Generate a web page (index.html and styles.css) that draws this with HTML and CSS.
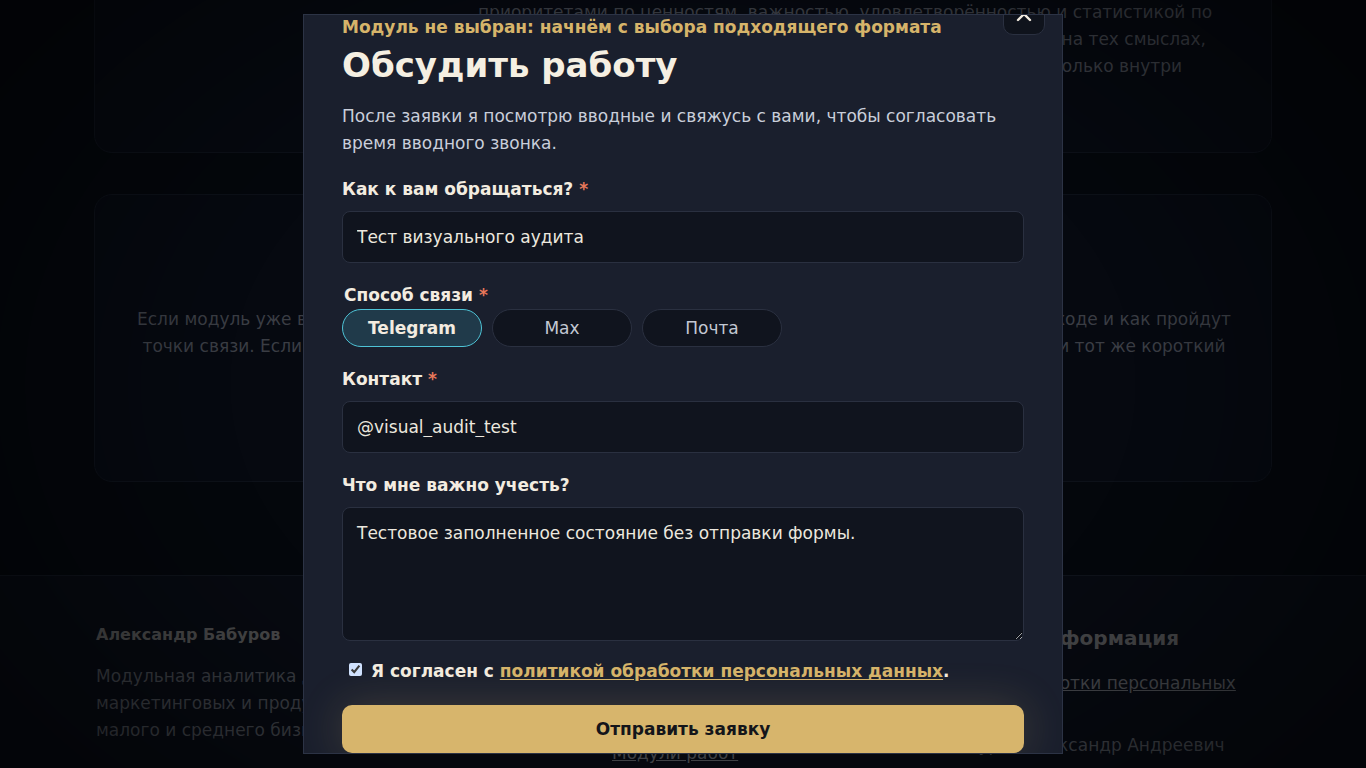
FILE: index.html
```html
<!DOCTYPE html>
<html lang="ru">
<head>
<meta charset="utf-8">
<title>Обсудить работу</title>
<link rel="stylesheet" href="styles.css">
</head>
<body>
<main class="page">
  <section class="card card-top">
    <h2 class="card-top-title">Принцип работы</h2>
    <p class="card-top-text">
      <span class="ln">Каждый модуль собирает данные о клиентах и связывает их с</span>
      <span class="ln">приоритетами по ценностям, важностью, удовлетворённостью и статистикой по</span>
      <span class="ln ln-c"><span>каждому сегменту, чтобы решения ещё</span><span>на тех смыслах,</span></span>
      <span class="ln ln-d"><span>которые важны клиентам, а не</span><span>только внутри</span></span>
      <span class="ln">компании.</span>
    </p>
  </section>

  <section class="card card-mid">
    <h3 class="card-mid-title">Как проходит вводный звонок</h3>
    <p class="card-mid-text">
      <span class="cl cl-1"><span>Если модуль уже выбран, обсудим</span><span>что будет происходить в ходе и как пройдут</span></span>
      <span class="cl cl-2"><span>точки связи. Если модуль ещё не выбран,</span><span>и тот же короткий</span></span>
    </p>
    <span class="ghost-btn">Обсудить работу</span>
  </section>
</main>

<footer class="footer">
  <div class="footer-inner">
    <div class="f-col">
      <div class="f-brand">Александр Бабуров</div>
      <p class="f-text">Модульная аналитика для принятия<br>маркетинговых и продуктовых решений<br>малого и среднего бизнеса.</p>
    </div>
    <div class="f-col">
      <h4 class="f-head">Навигация</h4>
      <ul class="f-list">
        <li><a class="f-link" href="#">Главная</a></li>
        <li><a class="f-link" href="#">Подход</a></li>
        <li><a class="f-link" href="#">Модули работ</a></li>
      </ul>
    </div>
    <div class="f-col">
      <h4 class="f-head">Правовая информация</h4>
      <ul class="f-list">
        <li><a class="f-link" href="#">Политика обработки персональных данных</a></li>
        <li class="f-plain">ИП Бабуров Александр Андреевич</li>
      </ul>
    </div>
  </div>
</footer>

<div class="backdrop"></div>

<div class="modal" role="dialog" aria-labelledby="modal-title">
  <button class="close" type="button" aria-label="Закрыть">
    <svg width="16" height="16" viewBox="0 0 16 16" aria-hidden="true">
      <path d="M2 2 L14 14 M14 2 L2 14" stroke="#f3ece0" stroke-width="2.4" stroke-linecap="round" fill="none"/>
    </svg>
  </button>
  <p class="eyebrow">Модуль не выбран: начнём с выбора подходящего формата</p>
  <h2 class="title" id="modal-title">Обсудить работу</h2>
  <p class="lead">После заявки я посмотрю вводные и свяжусь с вами, чтобы согласовать время вводного звонка.</p>

  <form class="form">
    <div class="field">
      <label class="label" for="name">Как к вам обращаться? <span class="req">*</span></label>
      <input class="input" id="name" type="text" value="Тест визуального аудита">
    </div>

    <div class="field field-tight">
      <div class="label legend">Способ связи <span class="req">*</span></div>
      <div class="pills">
        <button type="button" class="pill active">Telegram</button>
        <button type="button" class="pill">Max</button>
        <button type="button" class="pill">Почта</button>
      </div>
    </div>

    <div class="field">
      <label class="label" for="contact">Контакт <span class="req">*</span></label>
      <input class="input" id="contact" type="text" value="@visual_audit_test">
    </div>

    <div class="field">
      <label class="label" for="note">Что мне важно учесть?</label>
      <textarea class="input textarea" id="note">Тестовое заполненное состояние без отправки формы.</textarea>
    </div>

    <label class="consent">
      <input class="check" type="checkbox" checked>
      <span>Я согласен с <a class="consent-link" href="#">политикой обработки персональных данных</a>.</span>
    </label>

    <button class="submit" type="button">Отправить заявку</button>
  </form>
</div>
</body>
</html>
```

FILE: styles.css
```css
* { box-sizing: border-box; }

html, body {
  margin: 0;
  height: 100%;
  overflow: hidden;
}

body {
  background: #04070c;
  font-family: "DejaVu Sans", "Noto Sans", sans-serif;
  color: #3a3d44;
  font-size: 17px;
}

/* ---------- background page ---------- */
.page {
  width: 1178px;
  margin: 0 auto;
}

.card {
  border: 1px solid #0d1119;
  border-radius: 18px;
  background: #060910;
}

.card-top {
  margin-top: -73px;
  padding: 44px 42px 45px;
  display: grid;
  grid-template-columns: 299px 1fr;
  column-gap: 42px;
}

.card-top-title {
  margin: 0;
  font-size: 22px;
  line-height: 27px;
  color: #44464c;
}

.card-top-text {
  margin: 0;
  line-height: 27px;
}

.ln {
  display: block;
  white-space: nowrap;
}

.ln-c, .ln-d, .cl {
  display: flex;
  justify-content: space-between;
}

.ln-c { width: 728px; }
.ln-d { width: 704px; }

.card-mid {
  margin-top: 41px;
  padding: 61px 42px 59px;
  text-align: center;
}

.card-mid-title {
  margin: 0 0 20px;
  font-size: 22px;
  line-height: 30px;
  color: #44464c;
}

.card-mid-text {
  margin: 0;
  line-height: 27px;
}

.cl {
  white-space: nowrap;
}

.cl-1 { width: 1094px; }
.cl-2 { width: 1083px; margin-left: 5.5px; }

.ghost-btn {
  display: inline-block;
  margin-top: 18px;
  height: 44px;
  line-height: 44px;
  padding: 0 28px;
  border-radius: 10px;
  background: #2a2620;
  color: #111;
}

.footer {
  margin-top: 93px;
  border-top: 1px solid #0f131b;
  background: #070a11;
  padding-top: 49px;
  height: 400px;
}

.footer-inner {
  width: 1174px;
  margin: 0 auto;
  display: grid;
  grid-template-columns: 468px 255px 1fr;
  column-gap: 48px;
  align-items: start;
}

.f-brand {
  font-weight: 700;
  font-size: 16px;
  line-height: 20px;
  color: #4a4a4b;
}

.f-text {
  margin: 18px 0 0;
  line-height: 27px;
  color: #3a3d43;
}

.f-head {
  margin: 0;
  font-size: 20px;
  line-height: 26px;
  color: #47484a;
}

.f-list {
  list-style: none;
  margin: 19px 0 0;
  padding: 0;
  display: flex;
  flex-direction: column;
  gap: 8px;
  line-height: 27px;
}

.f-link {
  color: #46484d;
  text-decoration: underline;
}

.f-plain { color: #3c3f45; }

.backdrop {
  position: fixed;
  inset: 0;
  z-index: 10;
  background: radial-gradient(ellipse 60% 75% at 50% 50%, rgba(0, 0, 0, 0) 55%, rgba(0, 0, 0, 0.45) 100%);
}

/* ---------- modal ---------- */
.modal {
  position: fixed;
  top: 14px;
  left: 303px;
  width: 760px;
  height: 740px;
  z-index: 20;
  overflow: hidden;
  padding: 0 38px;
  background: #1a1f2d;
  border: 1px solid #2c3345;
}

.close {
  position: absolute;
  top: -22px;
  right: 17px;
  width: 42px;
  height: 42px;
  padding: 0;
  border-radius: 10px;
  background: #0f131c;
  border: 1px solid #2a3040;
  display: flex;
  align-items: center;
  justify-content: center;
}

.eyebrow {
  margin: 0;
  font-weight: 700;
  font-size: 17px;
  line-height: 24px;
  color: #d6b46a;
}

.title {
  margin: 6px 0 18px;
  font-weight: 700;
  font-size: 34px;
  line-height: 40px;
  color: #f5efe2;
}

.lead {
  margin: 0 0 20px;
  line-height: 27px;
  color: #c9ceda;
}

.form {
  display: flex;
  flex-direction: column;
  gap: 20px;
}

.field {
  display: flex;
  flex-direction: column;
  gap: 10px;
}

.field-tight { gap: 2px; }

.label {
  font-weight: 700;
  font-size: 17px;
  line-height: 24px;
  color: #f3ece0;
}

.legend { padding-left: 2px; }

.req { color: #e8785a; }

.input {
  display: block;
  width: 100%;
  height: 52px;
  padding: 0 14px;
  background: #10141e;
  border: 1px solid #2a3040;
  border-radius: 8px;
  font-family: "DejaVu Sans", "Noto Sans", sans-serif;
  font-size: 17px;
  color: #ece8df;
  outline: none;
}

.textarea {
  height: 134px;
  padding: 13px 14px;
  line-height: 25px;
  resize: vertical;
  color-scheme: dark;
}

.pills {
  display: flex;
  gap: 10px;
}

.pill {
  width: 140px;
  height: 38px;
  padding: 0;
  border-radius: 19px;
  border: 1px solid #2a3040;
  background: #10141e;
  color: #c3c8d3;
  font-family: "DejaVu Sans", "Noto Sans", sans-serif;
  font-size: 17px;
}

.pill.active {
  background: #203a4a;
  border-color: #4ec3d6;
  color: #f3ece0;
  font-weight: 700;
}

.consent {
  display: flex;
  align-items: center;
  margin-top: -4px;
  font-weight: 700;
  font-size: 17px;
  line-height: 28px;
  color: #f3ece0;
}

.check {
  width: 13px;
  height: 13px;
  margin: -3px 9px 0 7px;
  accent-color: #d0e2ff;
}

.consent-link {
  color: #d6b46a;
  text-decoration: underline;
  text-underline-offset: 2px;
}

.submit {
  display: block;
  width: 100%;
  height: 48px;
  border: 0;
  border-radius: 10px;
  background: #d7b56c;
  color: #14151a;
  font-family: "DejaVu Sans", "Noto Sans", sans-serif;
  font-weight: 700;
  font-size: 17px;
  box-shadow: 0 0 44px rgba(215, 181, 108, 0.2);
}
```
